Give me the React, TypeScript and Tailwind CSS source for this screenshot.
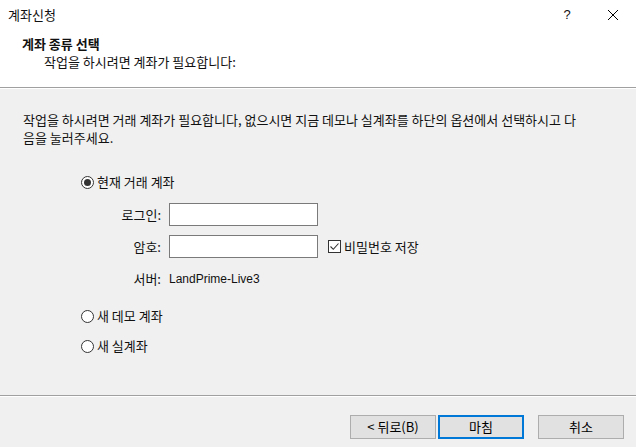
import React, { useState } from 'react';

const Radio: React.FC<{ checked: boolean; label: string; onClick: () => void }> = ({ checked, label, onClick }) => (
    <div onClick={onClick} className="flex items-center h-[16px] cursor-default">
        <span className="w-[13px] h-[13px] rounded-full border border-[#333333] bg-white flex items-center justify-center">
            {checked && <span className="w-[7px] h-[7px] rounded-full bg-[#333333]"></span>}
        </span>
        <span className="ml-[3px]">{label}</span>
    </div>
);

const Button: React.FC<{ label: string; primary?: boolean }> = ({ label, primary }) => (
    <button
        className={
            primary
                ? 'w-[86px] h-[24px] bg-[#e1e1e1] border-2 border-[#0078d7] text-black'
                : 'w-[86px] h-[24px] bg-[#e1e1e1] border border-[#adadad] text-black'
        }
    >
        {label}
    </button>
);

const App: React.FC = () => {
    const [mode, setMode] = useState<'current' | 'demo' | 'real'>('current');
    const [savePass, setSavePass] = useState(true);

    return (
        <div className="w-[636px] h-[447px] flex flex-col bg-[#f0f0f0] text-[#111111] text-[13px] leading-[16px] font-['Malgun_Gothic','Noto_Sans_CJK_KR',sans-serif] overflow-hidden">
            {/* Title + header */}
            <div className="bg-white h-[87px] flex flex-col">
                <div className="h-[29px] flex items-center justify-between pl-[8px]">
                    <span>계좌신청</span>
                    <div className="flex items-center h-full">
                        <span className="w-[46px] text-center text-[13px] font-['Liberation_Sans',sans-serif]">?</span>
                        <span className="w-[46px] flex items-center justify-center">
                            <svg width="10" height="10" viewBox="0 0 10 10">
                                <path d="M0 0 L10 10 M10 0 L0 10" stroke="#000" strokeWidth="1" />
                            </svg>
                        </span>
                    </div>
                </div>
                <div className="pl-[22px] mt-[6px] leading-[18px] font-bold">계좌 종류 선택</div>
                <div className="pl-[44px] leading-[18px]">작업을 하시려면 계좌가 필요합니다:</div>
            </div>
            <div className="h-[1px] bg-[#a0a0a0]"></div>
            <div className="h-[1px] bg-white"></div>

            {/* Content */}
            <div className="flex-1 flex flex-col px-[23px]">
                <p className="mt-[22px] leading-[18px]">
                    작업을 하시려면 거래 계좌가 필요합니다, 없으시면 지금 데모나 실계좌를 하단의 옵션에서 선택하시고 다<br />음을 눌러주세요.
                </p>
                <div className="ml-[58px] mt-[27px]">
                    <Radio checked={mode === 'current'} label="현재 거래 계좌" onClick={() => setMode('current')} />
                </div>

                <div className="flex items-center mt-[13px]">
                    <span className="w-[146px] text-right pr-[8px]">로그인:</span>
                    <input className="w-[149px] h-[23px] bg-white border border-[#7a7a7a] outline-none px-1" />
                </div>
                <div className="flex items-center mt-[9px]">
                    <span className="w-[146px] text-right pr-[8px]">암호:</span>
                    <input type="password" className="w-[149px] h-[23px] bg-white border border-[#7a7a7a] outline-none px-1" />
                    <div onClick={() => setSavePass(!savePass)} className="flex items-center ml-[10px]">
                        <span className="w-[13px] h-[13px] border border-[#333333] bg-white flex items-center justify-center">
                            {savePass && (
                                <svg width="11" height="11" viewBox="0 0 11 11">
                                    <path d="M1.5 5.5 L4.3 8.3 L9.5 2.5" stroke="#333" strokeWidth="1.1" fill="none" />
                                </svg>
                            )}
                        </span>
                        <span className="ml-[3px]">비밀번호 저장</span>
                    </div>
                </div>
                <div className="flex items-center mt-[13px] h-[16px]">
                    <span className="w-[146px] text-right pr-[8px]">서버:</span>
                    <span className="font-['Liberation_Sans',sans-serif] text-[12px]">LandPrime-Live3</span>
                </div>

                <div className="ml-[58px] mt-[21px]">
                    <Radio checked={mode === 'demo'} label="새 데모 계좌" onClick={() => setMode('demo')} />
                </div>
                <div className="ml-[58px] mt-[14px]">
                    <Radio checked={mode === 'real'} label="새 실계좌" onClick={() => setMode('real')} />
                </div>
            </div>

            <div className="h-[1px] bg-[#a0a0a0]"></div>
            <div className="h-[1px] bg-white"></div>

            {/* Footer */}
            <div className="h-[50px] flex justify-end items-start pt-[18px] pr-[12px]">
                <Button label="< 뒤로(B)" />
                <div className="ml-[2px]">
                    <Button label="마침" primary />
                </div>
                <div className="ml-[14px]">
                    <Button label="취소" />
                </div>
            </div>
        </div>
    );
};

export default App;
